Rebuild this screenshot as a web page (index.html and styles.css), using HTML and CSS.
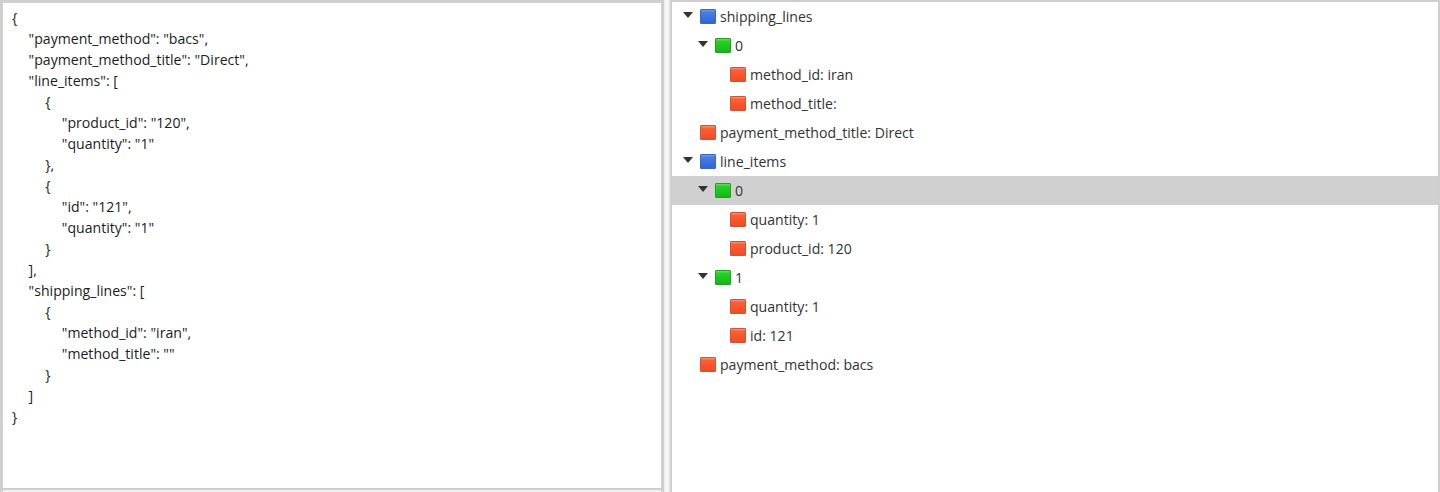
FILE: index.html
```html
<!DOCTYPE html>
<html lang="en">
<head>
<meta charset="utf-8">
<title>JSON tree</title>
<link rel="stylesheet" href="styles.css">
</head>
<body>
<svg class="defs" width="0" height="0" aria-hidden="true">
  <defs>
    <linearGradient id="g-blue" x1="0" y1="0" x2="0" y2="1"><stop offset="0" stop-color="#7ba3ee"/><stop offset="0.2" stop-color="#4a7de2"/><stop offset="1" stop-color="#2f66d6"/></linearGradient>
    <linearGradient id="g-green" x1="0" y1="0" x2="0" y2="1"><stop offset="0" stop-color="#6fe46f"/><stop offset="0.2" stop-color="#28d028"/><stop offset="1" stop-color="#12b812"/></linearGradient>
    <linearGradient id="g-red" x1="0" y1="0" x2="0" y2="1"><stop offset="0" stop-color="#ff9a80"/><stop offset="0.2" stop-color="#fb5f38"/><stop offset="1" stop-color="#f24a20"/></linearGradient>
    <symbol id="box-blue" viewBox="0 0 16 15"><rect x="0.5" y="0.5" width="15" height="14" rx="0.5" fill="url(#g-blue)" stroke="#3a68bf"/></symbol>
    <symbol id="box-green" viewBox="0 0 16 15"><rect x="0.5" y="0.5" width="15" height="14" rx="0.5" fill="url(#g-green)" stroke="#2a9a2a"/></symbol>
    <symbol id="box-red" viewBox="0 0 16 15"><rect x="0.5" y="0.5" width="15" height="14" rx="0.5" fill="url(#g-red)" stroke="#c9553a"/></symbol>
    <symbol id="arrow" viewBox="0 0 10 6"><path d="M0 0H10L5 6Z" fill="#333"/></symbol>
  </defs>
</svg>
<main class="app">
  <section class="editor">
    <div class="code">
      <div class="line i0">{</div>
      <div class="line i1">"payment_method": "bacs",</div>
      <div class="line i1">"payment_method_title": "Direct",</div>
      <div class="line i1">"line_items": [</div>
      <div class="line i2">{</div>
      <div class="line i3">"product_id": "120",</div>
      <div class="line i3">"quantity": "1"</div>
      <div class="line i2">},</div>
      <div class="line i2">{</div>
      <div class="line i3">"id": "121",</div>
      <div class="line i3">"quantity": "1"</div>
      <div class="line i2">}</div>
      <div class="line i1">],</div>
      <div class="line i1">"shipping_lines": [</div>
      <div class="line i2">{</div>
      <div class="line i3">"method_id": "iran",</div>
      <div class="line i3">"method_title": ""</div>
      <div class="line i2">}</div>
      <div class="line i1">]</div>
      <div class="line i0">}</div>
    </div>
  </section>
  <div class="splitter"></div>
  <section class="tree">
    <div class="row lvl0"><svg class="arrow"><use href="#arrow"/></svg><svg class="box"><use href="#box-blue"/></svg><span>shipping_lines</span></div>
    <div class="row lvl1"><svg class="arrow"><use href="#arrow"/></svg><svg class="box"><use href="#box-green"/></svg><span>0</span></div>
    <div class="row lvl2"><svg class="box"><use href="#box-red"/></svg><span>method_id: iran</span></div>
    <div class="row lvl2"><svg class="box"><use href="#box-red"/></svg><span>method_title:</span></div>
    <div class="row lvl0 leaf"><svg class="box"><use href="#box-red"/></svg><span>payment_method_title: Direct</span></div>
    <div class="row lvl0"><svg class="arrow"><use href="#arrow"/></svg><svg class="box"><use href="#box-blue"/></svg><span>line_items</span></div>
    <div class="row lvl1 selected"><svg class="arrow"><use href="#arrow"/></svg><svg class="box"><use href="#box-green"/></svg><span>0</span></div>
    <div class="row lvl2"><svg class="box"><use href="#box-red"/></svg><span>quantity: 1</span></div>
    <div class="row lvl2"><svg class="box"><use href="#box-red"/></svg><span>product_id: 120</span></div>
    <div class="row lvl1"><svg class="arrow"><use href="#arrow"/></svg><svg class="box"><use href="#box-green"/></svg><span>1</span></div>
    <div class="row lvl2"><svg class="box"><use href="#box-red"/></svg><span>quantity: 1</span></div>
    <div class="row lvl2"><svg class="box"><use href="#box-red"/></svg><span>id: 121</span></div>
    <div class="row lvl0 leaf"><svg class="box"><use href="#box-red"/></svg><span>payment_method: bacs</span></div>
  </section>
</main>
</body>
</html>
```
FILE: styles.css
```css
* { box-sizing: border-box; }
html, body { margin: 0; height: 100%; }
body { background: #fff; font-family: "Open Sans", "Noto Sans", sans-serif; overflow: hidden; }
.defs { display: block; height: 0; }
.app {
  display: flex;
  width: 1440px;
  height: 492px;
  background: #fff;
}
.editor {
  display: flex;
  width: 664px;
  height: 492px;
  padding-bottom: 2px;
  border-top: 3px solid #cfcfcf;
  border-left: 3px solid #cfcfcf;
  border-right: 3px solid #cfcfcf;
  background: #f1f1f1;
}
.code {
  flex: 1;
  padding: 3.6px 0 0 9px;
  background: #fff;
  border-bottom: 2px solid #cfcfcf;
  font-size: 14.1px;
  line-height: 21.05px;
  color: #1c1c1c;
}
.line { white-space: nowrap; }
.i1 { padding-left: 16.6px; }
.i2 { padding-left: 33.2px; }
.i3 { padding-left: 49.8px; }
.splitter {
  width: 6px;
  background: linear-gradient(to right, #ececec, #fafafa 50%, #e6e6e6);
}
.tree {
  flex: 1;
  height: 492px;
  border-top: 2px solid #cfcfcf;
  border-left: 2px solid #cfcfcf;
  border-right: 2px solid #cfcfcf;
}
.row {
  display: flex;
  align-items: center;
  height: 29px;
  font-size: 14.1px;
  color: #333;
  white-space: nowrap;
}
.row.selected { background: #d0d0d0; }
.arrow { width: 10px; height: 6px; margin-right: 7px; margin-top: -4px; flex: none; }
.box { width: 16px; height: 15px; margin-right: 4px; flex: none; }
.lvl0 { padding-left: 11px; }
.lvl1 { padding-left: 26px; }
.lvl2 { padding-left: 58px; }
.lvl0.leaf { padding-left: 28px; }
```
